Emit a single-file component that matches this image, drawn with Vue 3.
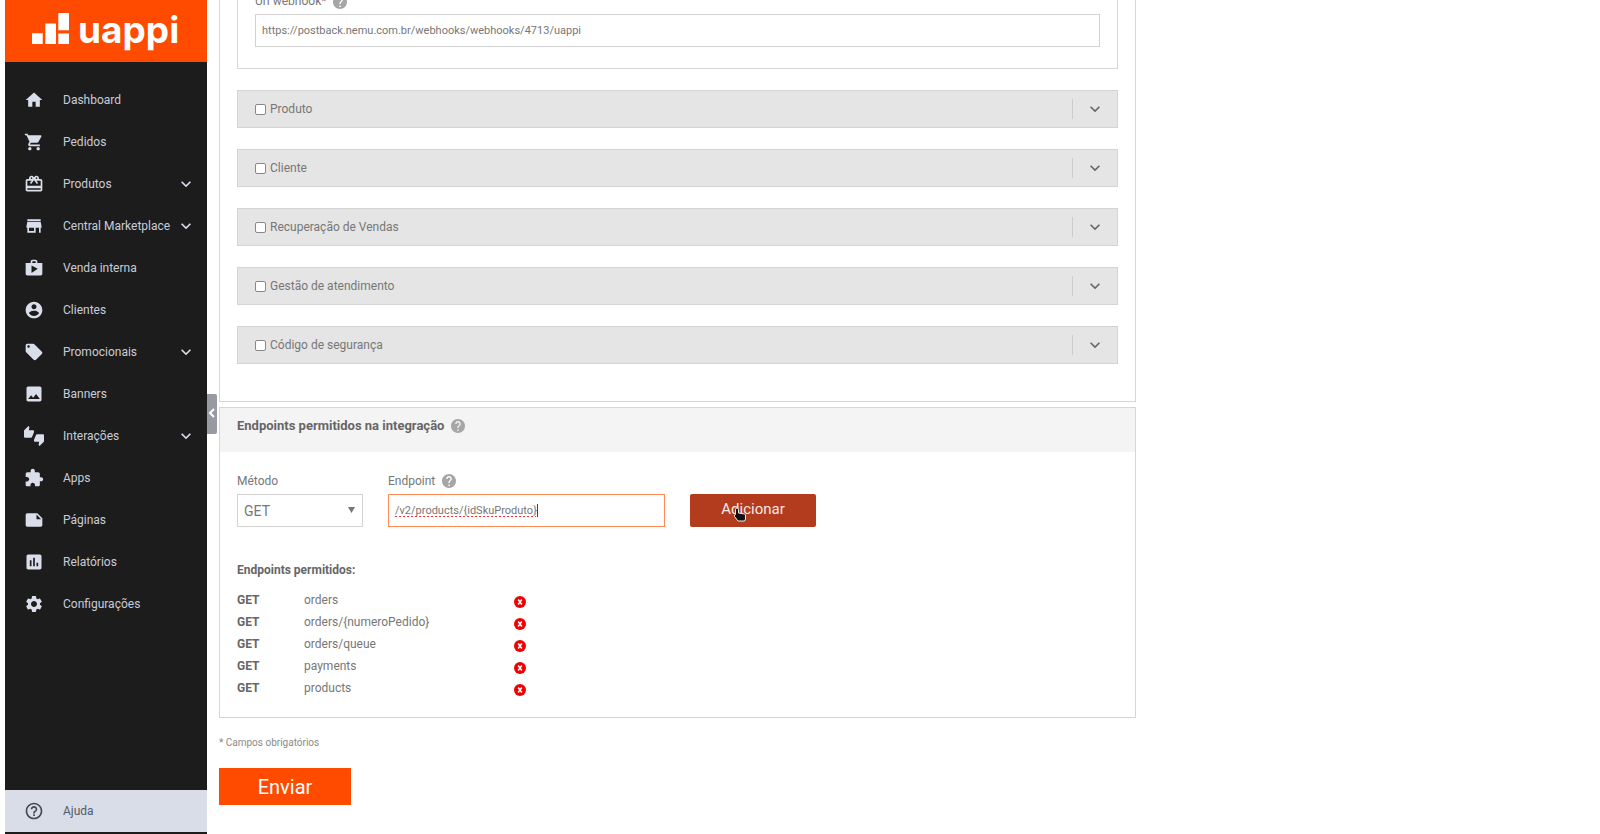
<script setup>
import { ref } from 'vue'

const navItems = [
  { label: 'Dashboard', icon: 'M10 20v-6h4v6h5v-8h3L12 3 2 12h3v8z' },
  { label: 'Pedidos', icon: 'M7 18c-1.1 0-1.99.9-1.99 2S5.9 22 7 22s2-.9 2-2-.9-2-2-2zM1 2v2h2l3.6 7.59-1.35 2.45c-.16.28-.25.61-.25.96 0 1.1.9 2 2 2h12v-2H7.42c-.14 0-.25-.11-.25-.25l.03-.12.9-1.63h7.45c.75 0 1.41-.41 1.75-1.03l3.58-6.49c.08-.14.12-.31.12-.48 0-.55-.45-1-1-1H5.21l-.94-2H1zm16 16c-1.1 0-1.99.9-1.99 2s.89 2 1.99 2 2-.9 2-2-.9-2-2-2z' },
  { label: 'Produtos', expandable: true, icon: 'M20 6h-2.18c.11-.31.18-.65.18-1 0-1.66-1.34-3-3-3-1.05 0-1.96.54-2.5 1.35l-.5.67-.5-.68C10.96 2.54 10.05 2 9 2 7.34 2 6 3.34 6 5c0 .35.07.69.18 1H4c-1.11 0-1.99.89-1.99 2L2 19c0 1.11.89 2 2 2h16c1.11 0 2-.89 2-2V8c0-1.11-.89-2-2-2zm-5-2c.55 0 1 .45 1 1s-.45 1-1 1-1-.45-1-1 .45-1 1-1zM9 4c.55 0 1 .45 1 1s-.45 1-1 1-1-.45-1-1 .45-1 1-1zm11 15H4v-2h16v2zm0-5H4V8h5.08L7 10.83 8.62 12 11 8.76l1-1.36 1 1.36L15.38 12 17 10.83 14.92 8H20v6z' },
  { label: 'Central Marketplace', expandable: true, icon: 'M20 4H4v2h16V4zm1 10v-2l-1-5H4l-1 5v2h1v6h10v-6h4v6h2v-6h1zm-9 4H6v-4h6v4z' },
  { label: 'Venda interna', icon: 'M16 6V4c0-1.11-.89-2-2-2h-4c-1.11 0-2 .89-2 2v2H2v13c0 1.11.89 2 2 2h16c1.11 0 2-.89 2-2V6h-6zm-6-2h4v2h-4V4zM9 18V9l7.5 4L9 18z' },
  { label: 'Clientes', icon: 'M12 2C6.48 2 2 6.48 2 12s4.48 10 10 10 10-4.48 10-10S17.52 2 12 2zm0 3c1.66 0 3 1.34 3 3s-1.34 3-3 3-3-1.34-3-3 1.34-3 3-3zm0 14.2c-2.5 0-4.71-1.28-6-3.22.03-1.99 4-3.08 6-3.08 1.99 0 5.97 1.09 6 3.08-1.29 1.94-3.5 3.22-6 3.22z' },
  { label: 'Promocionais', expandable: true, icon: 'M21.41 11.58l-9-9C12.05 2.22 11.55 2 11 2H4c-1.1 0-2 .9-2 2v7c0 .55.22 1.05.59 1.42l9 9c.36.36.86.58 1.41.58.55 0 1.05-.22 1.41-.59l7-7c.37-.36.59-.86.59-1.41 0-.55-.23-1.06-.59-1.42zM5.5 7C4.67 7 4 6.33 4 5.5S4.67 4 5.5 4 7 4.67 7 5.5 6.33 7 5.5 7z' },
  { label: 'Banners', icon: 'M21 19V5c0-1.1-.9-2-2-2H5c-1.1 0-2 .9-2 2v14c0 1.1.9 2 2 2h14c1.1 0 2-.9 2-2zM8.5 13.5l2.5 3.01L14.5 12l4.5 6H5l3.5-4.5z' },
  { label: 'Interações', expandable: true, icon: 'M12 6c0-.55-.45-1-1-1H5.82l.66-3.18.02-.23c0-.31-.13-.59-.33-.8L5.38 0 .44 4.94C.17 5.21 0 5.59 0 6v6.5c0 .83.67 1.5 1.5 1.5h6.75c.62 0 1.15-.38 1.38-.91l2.26-5.29c.07-.17.11-.36.11-.55V6zm10.5 4h-6.75c-.62 0-1.15.38-1.38.91l-2.26 5.29c-.07.17-.11.36-.11.55V18c0 .55.45 1 1 1h5.18l-.66 3.18-.02.24c0 .31.13.59.33.8l.79.78 4.94-4.94c.27-.27.44-.65.44-1.06v-6.5c0-.83-.67-1.5-1.5-1.5z' },
  { label: 'Apps', icon: 'M20.5 11H19V7c0-1.1-.9-2-2-2h-4V3.5C13 2.12 11.88 1 10.5 1S8 2.12 8 3.5V5H4c-1.1 0-1.99.9-1.99 2v3.8H3.5c1.49 0 2.7 1.21 2.7 2.7s-1.21 2.7-2.7 2.7H2V20c0 1.1.9 2 2 2h3.8v-1.5c0-1.49 1.21-2.7 2.7-2.7 1.49 0 2.7 1.21 2.7 2.7V22H17c1.1 0 2-.9 2-2v-4h1.5c1.38 0 2.5-1.12 2.5-2.5S21.88 11 20.5 11z' },
  { label: 'Páginas', icon: 'M16 4H4c-1.1 0-2 .9-2 2v12.01c0 1.1.9 1.99 2 1.99h16c1.1 0 2-.9 2-2v-8l-6-6zm-1 7V5.5l5.5 5.5H15z' },
  { label: 'Relatórios', icon: 'M19 3H5c-1.1 0-2 .9-2 2v14c0 1.1.9 2 2 2h14c1.1 0 2-.9 2-2V5c0-1.1-.9-2-2-2zM9 17H7v-7h2v7zm4 0h-2V7h2v10zm4 0h-2v-4h2v4z' },
  { label: 'Configurações', icon: 'M19.14 12.94c.04-.3.06-.61.06-.94 0-.32-.02-.64-.07-.94l2.03-1.58c.18-.14.23-.41.12-.61l-1.92-3.32c-.12-.22-.37-.29-.59-.22l-2.39.96c-.5-.38-1.03-.7-1.62-.94l-.36-2.54c-.04-.24-.24-.41-.48-.41h-3.84c-.24 0-.43.17-.47.41l-.36 2.54c-.59.24-1.13.57-1.62.94l-2.39-.96c-.22-.08-.47 0-.59.22L2.74 8.87c-.12.21-.08.47.12.61l2.03 1.58c-.05.3-.09.63-.09.94s.02.64.07.94l-2.03 1.58c-.18.14-.23.41-.12.61l1.92 3.32c.12.22.37.29.59.22l2.39-.96c.5.38 1.03.7 1.62.94l.36 2.54c.05.24.24.41.48.41h3.84c.24 0 .44-.17.47-.41l.36-2.54c.59-.24 1.13-.56 1.62-.94l2.39.96c.22.08.47 0 .59-.22l1.92-3.32c.12-.22.07-.47-.12-.61l-2.01-1.58zM12 15.6c-1.98 0-3.6-1.62-3.6-3.6s1.62-3.6 3.6-3.6 3.6 1.62 3.6 3.6-1.62 3.6-3.6 3.6z' }
]

const expandIcon = 'M16.59 8.59L12 13.17 7.41 8.59 6 10l6 6 6-6z'
const helpIcon = 'M12 2C6.48 2 2 6.48 2 12s4.48 10 10 10 10-4.48 10-10S17.52 2 12 2zm1 17h-2v-2h2v2zm2.07-7.75l-.9.92C13.45 12.9 13 13.5 13 15h-2v-.5c0-1.1.45-2.1 1.17-2.83l1.24-1.26c.37-.36.59-.86.59-1.41 0-1.1-.9-2-2-2s-2 .9-2 2H8c0-2.21 1.79-4 4-4s4 1.79 4 4c0 .88-.36 1.68-.93 2.25z'
const helpOutline = 'M11 18h2v-2h-2v2zm1-16C6.48 2 2 6.48 2 12s4.48 10 10 10 10-4.48 10-10S17.52 2 12 2zm0 18c-4.41 0-8-3.59-8-8s3.59-8 8-8 8 3.59 8 8-3.59 8-8 8zm0-14c-2.21 0-4 1.79-4 4h2c0-1.1.9-2 2-2s2 .9 2 2c0 2-3 1.75-3 5h2c0-2.25 3-2.5 3-5 0-2.21-1.79-4-4-4z'

const sections = ref([
  { label: 'Produto', checked: false },
  { label: 'Cliente', checked: false },
  { label: 'Recuperação de Vendas', checked: false },
  { label: 'Gestão de atendimento', checked: false },
  { label: 'Código de segurança', checked: false }
])

const webhookUrl = ref('https://postback.nemu.com.br/webhooks/webhooks/4713/uappi')
const method = ref('GET')
const endpoint = ref('/v2/products/{idSkuProduto}')
const endpoints = ref(['orders', 'orders/{numeroPedido}', 'orders/queue', 'payments', 'products'])
</script>

<template>
  <div class="layout">
    <aside class="sidebar">
      <div class="brand">
        <svg class="brand-bars" viewBox="0 0 37 31" aria-hidden="true">
          <path d="M0 20.3h10.7V31H0zM13.3 10.5H24V31H13.3zM26.3 0H37v17.3H26.3zM26.3 20.6H37V31H26.3z" />
        </svg>
        <span class="brand-name">uappi</span>
      </div>
      <nav class="nav">
        <a v-for="item in navItems" :key="item.label" href="#" class="nav-item">
          <svg class="icon" viewBox="0 0 24 24" aria-hidden="true"><path :d="item.icon" /></svg>
          <span class="nav-label">{{ item.label }}</span>
          <svg v-if="item.expandable" class="icon" viewBox="0 0 24 24" aria-hidden="true"><path :d="expandIcon" /></svg>
        </a>
      </nav>
      <a href="#" class="nav-item help-link">
        <svg class="icon" viewBox="0 0 24 24" aria-hidden="true"><path :d="helpOutline" /></svg>
        <span class="nav-label">Ajuda</span>
      </a>
      <button type="button" class="collapse" aria-label="Recolher menu">
        <svg viewBox="0 0 10 14" aria-hidden="true"><path d="M7 3L3 7l4 4" /></svg>
      </button>
    </aside>

    <main class="content">
      <section class="panel events">
        <div class="webhook">
          <div class="webhook-label">
            <label for="webhook">Url webhook*</label>
            <svg class="help" viewBox="2 2 20 20" aria-hidden="true"><path :d="helpIcon" /></svg>
          </div>
          <input id="webhook" v-model="webhookUrl" type="text" class="field" spellcheck="false" />
        </div>
        <div v-for="section in sections" :key="section.label" class="accordion">
          <label class="accordion-label">
            <input v-model="section.checked" type="checkbox" />
            <span>{{ section.label }}</span>
          </label>
          <button type="button" class="toggle" :aria-label="'Expandir ' + section.label">
            <svg class="icon" viewBox="0 0 24 24" aria-hidden="true"><path :d="expandIcon" /></svg>
          </button>
        </div>
      </section>

      <section class="panel">
        <header class="panel-header">
          <h2>Endpoints permitidos na integração</h2>
          <svg class="help" viewBox="2 2 20 20" aria-hidden="true"><path :d="helpIcon" /></svg>
        </header>
        <div class="panel-body">
          <form class="endpoint-form" @submit.prevent>
            <div class="form-group method">
              <label for="method">Método</label>
              <div class="select-wrap">
                <select id="method" v-model="method" class="field"><option>GET</option></select>
                <svg class="caret-down" viewBox="0 0 7 6" aria-hidden="true"><path d="M0 0h7L3.5 6z" /></svg>
              </div>
            </div>
            <div class="form-group endpoint">
              <div class="label-row">
                <label for="endpoint">Endpoint</label>
                <svg class="help" viewBox="2 2 20 20" aria-hidden="true"><path :d="helpIcon" /></svg>
              </div>
              <div class="input-wrap">
                <input id="endpoint" v-model="endpoint" type="text" class="field active" spellcheck="false" />
                <span class="text-cursor"></span>
              </div>
            </div>
            <button type="submit" class="add">
              Adicionar
              <svg class="pointer" viewBox="0 0 14 14" aria-hidden="true">
                <path d="M2.5 1.5a1.5 1.5 0 0 1 3 0V5l6 1 1 1v4l-1 2H5L1.5 8.5V7l1-.5z" />
              </svg>
            </button>
          </form>
          <h3>Endpoints permitidos:</h3>
          <ul class="endpoints">
            <li v-for="path in endpoints" :key="path">
              <strong>GET</strong>
              <span>{{ path }}</span>
              <button type="button" class="remove" :aria-label="'Remover ' + path">
                <svg viewBox="0 0 12 12" aria-hidden="true">
                  <circle cx="6" cy="6" r="6" />
                  <path d="M4.2 3.5l3.6 5M7.8 3.5l-3.6 5" />
                </svg>
              </button>
            </li>
          </ul>
        </div>
      </section>

      <p class="note">* Campos obrigatórios</p>
      <button type="submit" class="send">Enviar</button>
    </main>
  </div>
</template>

<style>
body {
  background: #fff;
}
</style>

<style scoped>
* {
  box-sizing: border-box;
}
.layout {
  display: flex;
  gap: 12px;
  padding-left: 5px;
  min-height: 100vh;
  font-family: Roboto, "Noto Sans", sans-serif;
  font-size: 12px;
  line-height: 20px;
  color: #777;
}
button,
input,
select {
  font-family: inherit;
  margin: 0;
}
.sidebar {
  position: relative;
  display: flex;
  flex-direction: column;
  flex: 0 0 202px;
  min-width: 0;
  padding-bottom: 2px;
  background: #1c1c1c;
}
.brand {
  display: flex;
  gap: 9px;
  height: 62px;
  padding: 13px 0 0 27px;
  background: #ff4b00;
  color: #fff;
}
.brand-bars {
  width: 37px;
  height: 31px;
  fill: #fff;
}
.brand-name {
  font-family: Inter, sans-serif;
  font-size: 37px;
  font-weight: 700;
  line-height: 34px;
}
.nav {
  display: flex;
  flex-direction: column;
  padding-top: 17px;
}
.nav-item {
  display: flex;
  align-items: center;
  height: 42px;
  padding: 0 11px 0 19px;
  color: #c9ccd8;
  text-decoration: none;
}
.icon {
  width: 20px;
  height: 20px;
  flex: none;
  fill: #dadeea;
}
.nav-label {
  flex: 1;
  margin-left: 19px;
  white-space: nowrap;
}
.help-link {
  margin-top: auto;
  background: #d9dde8;
  color: #565a68;
}
.help-link .icon {
  fill: #454955;
}
.collapse {
  position: absolute;
  left: 100%;
  top: 394px;
  width: 10px;
  height: 40px;
  padding: 0;
  border: 0;
  border-radius: 0 2px 2px 0;
  background: #989aa3;
}
.collapse svg {
  display: block;
  width: 10px;
  margin-top: -2px;
  fill: none;
  stroke: #fff;
  stroke-width: 2;
}
.content {
  flex: 1;
  max-width: 917px;
}
.panel {
  border: 1px solid #d6d6d6;
}
.events {
  margin-bottom: 5px;
  padding: 0 17px 37px;
  border-top: 0;
}
.webhook {
  margin-bottom: 21px;
  padding: 0 17px 21px;
  border: 1px solid #d6d6d6;
  border-top: 0;
}
.webhook-label {
  display: flex;
  align-items: flex-end;
  gap: 7px;
  height: 14px;
  overflow: hidden;
  padding-bottom: 5px;
}
.webhook-label label {
  line-height: 16px;
}
.help {
  width: 14px;
  height: 14px;
  flex: none;
  fill: #a6a6a6;
}
.field {
  display: block;
  width: 100%;
  height: 33px;
  padding: 0 6px;
  border: 1px solid #d2d2d2;
  border-radius: 0;
  background: #fff;
  color: #777;
  font-size: 11px;
}
.accordion {
  display: flex;
  align-items: center;
  height: 38px;
  margin-bottom: 21px;
  padding-left: 17px;
  border: 1px solid #d4d4d4;
  background: #e5e5e5;
}
.events .accordion:last-child {
  margin-bottom: 0;
}
.accordion-label {
  display: flex;
  flex: 1;
  align-items: center;
  gap: 4px;
}
.accordion-label input {
  width: 11px;
  height: 11px;
  appearance: none;
  border: 1px solid #888;
  border-radius: 2px;
  background: #fff;
}
.accordion-label input:checked {
  background: #ff4b00;
}
.toggle {
  width: 45px;
  height: 20px;
  padding: 0;
  border: 0;
  border-left: 1px solid #ccc;
  background: none;
}
.toggle .icon {
  display: block;
  margin: 0 auto;
  fill: #666;
}
.panel-header {
  display: flex;
  align-items: center;
  gap: 7px;
  height: 44px;
  padding: 0 17px 9px;
  background: #f4f4f4;
}
h2,
h3 {
  margin: 0;
  color: #666;
  font-size: 12px;
  font-weight: 700;
}
h2 {
  font-size: 13px;
}
.panel-body {
  padding: 19px 17px 18px;
}
.endpoint-form {
  display: flex;
  align-items: flex-end;
  gap: 25px;
}
.form-group {
  display: flex;
  flex-direction: column;
  gap: 3px;
}
.label-row {
  display: flex;
  align-items: center;
  gap: 7px;
}
.method {
  width: 126px;
}
.endpoint {
  width: 277px;
}
.select-wrap,
.input-wrap {
  position: relative;
}
select.field {
  appearance: none;
  font-size: 14px;
}
.caret-down {
  position: absolute;
  top: 13px;
  right: 8px;
  width: 7px;
  fill: #777;
  pointer-events: none;
}
.active {
  border-color: #ff8a55;
  text-decoration: underline dotted #e33 2px;
  text-underline-offset: 2px;
}
.text-cursor {
  position: absolute;
  top: 10px;
  left: 149px;
  width: 1px;
  height: 13px;
  background: #444;
}
.add {
  position: relative;
  width: 126px;
  height: 33px;
  padding: 0 0 3px;
  border: 0;
  border-radius: 2px;
  background: #b33b1e;
  color: #f7e9e5;
  font-size: 15px;
}
.pointer {
  position: absolute;
  left: 43px;
  top: 14px;
  width: 14px;
  fill: #111;
  stroke: #eee;
  stroke-width: 1;
}
h3 {
  margin-top: 33px;
}
.endpoints {
  margin: 9px 0 0;
  padding: 0;
  list-style: none;
}
.endpoints li {
  display: grid;
  grid-template-columns: 67px 210px 12px;
  align-items: center;
  height: 22px;
}
.endpoints strong {
  color: #666;
}
.remove {
  width: 12px;
  height: 12px;
  margin-top: 4px;
  padding: 0;
  border: 0;
  background: none;
}
.remove svg {
  display: block;
  fill: #f00000;
  stroke: #fff;
  stroke-width: 1.5;
}
.remove circle {
  stroke: none;
}
.note {
  margin: 15px 0;
  color: #8a8a8a;
  font-size: 10px;
}
.send {
  display: block;
  width: 132px;
  height: 37px;
  padding: 0;
  border: 0;
  background: #ff4b00;
  color: #fff;
  font-size: 20px;
}
</style>
